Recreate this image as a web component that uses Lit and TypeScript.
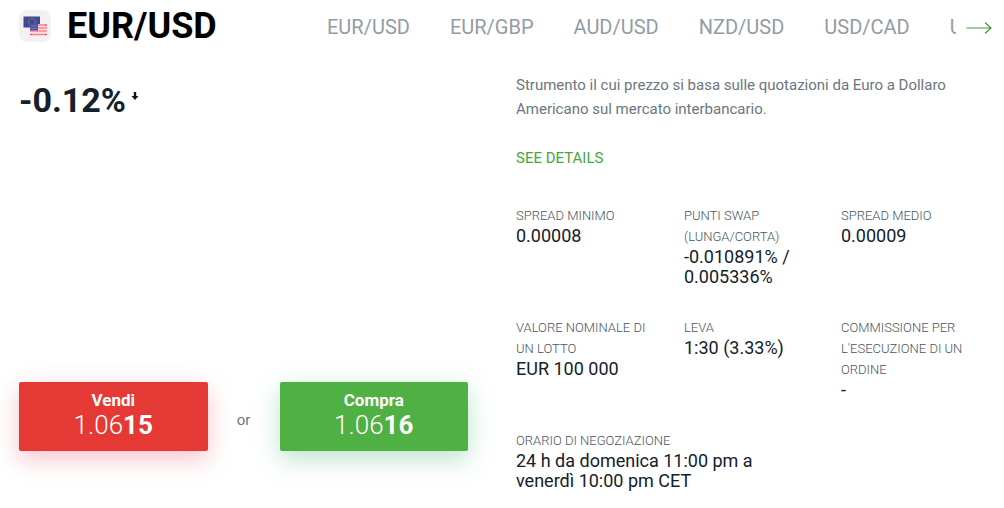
import { LitElement, html, css, nothing } from "lit";
import { customElement } from "lit/decorators.js";

interface Detail {
  label: string;
  value: string;
  wide?: boolean;
}

const PAIRS = ["EUR/USD", "EUR/GBP", "AUD/USD", "NZD/USD", "USD/CAD", "USD/CHF"];

const DETAILS: Detail[] = [
  { label: "Spread minimo", value: "0.00008" },
  { label: "Punti swap (lunga/corta)", value: "-0.010891% / 0.005336%" },
  { label: "Spread medio", value: "0.00009" },
  { label: "Valore nominale di un lotto", value: "EUR 100 000" },
  { label: "Leva", value: "1:30 (3.33%)" },
  { label: "Commissione per l'esecuzione di un ordine", value: "-" },
  { label: "Orario di negoziazione", value: "24 h da domenica 11:00 pm a venerdì 10:00 pm CET", wide: true },
];

@customElement("app-root")
export class AppRoot extends LitElement {
  static styles = css`
    :host {
      display: block;
      background: #fff;
      color: #14212b;
      font-family: Roboto, "Liberation Sans", sans-serif;
      overflow: hidden;
    }
    .header {
      display: flex;
      align-items: center;
      height: 52px;
      padding: 0 12px 0 19px;
    }
    .flags {
      flex: none;
      width: 32px;
      height: 32px;
    }
    .title {
      flex: none;
      width: 259px;
      margin: 0;
      padding-left: 16px;
      box-sizing: border-box;
      color: #000;
      font-size: 36px;
      line-height: 40px;
      font-weight: 700;
    }
    .pairs {
      flex: 1;
      min-width: 0;
      display: flex;
      gap: 40px;
      padding: 2px 0 0 17px;
      overflow: hidden;
    }
    .pair {
      flex: none;
      color: #939ca6;
      font-size: 20px;
      line-height: 24px;
      text-decoration: none;
    }
    .next {
      flex: none;
      display: flex;
      margin-left: 10px;
      padding: 4px 0 0;
      border: 0;
      background: none;
      cursor: pointer;
    }
    .main {
      display: grid;
      grid-template-columns: 1fr 1fr;
      gap: 48px;
      padding: 21px 39px 16px 19px;
    }
    .quote {
      padding-top: 7px;
    }
    .change {
      display: flex;
      gap: 5px;
      font-size: 34px;
      line-height: 40px;
      font-weight: 700;
    }
    .down {
      margin-top: 12px;
    }
    .chart {
      height: 262px;
    }
    .trade {
      display: flex;
      align-items: center;
    }
    .or {
      width: 72px;
      text-align: center;
      color: #6b7680;
      font-size: 15px;
      line-height: 24px;
      padding-top: 6px;
    }
    .order {
      flex: 1;
      padding: 8px 0 11px;
      border: 0;
      border-radius: 2px;
      color: #fff;
      font-family: inherit;
      cursor: pointer;
    }
    .sell {
      background: #e53935;
      box-shadow: 0 8px 24px rgba(229, 57, 80, 0.3);
    }
    .buy {
      background: #4fb043;
      box-shadow: 0 8px 24px rgba(60, 175, 110, 0.35);
    }
    .side {
      display: block;
      font-size: 17px;
      line-height: 20px;
      font-weight: 700;
    }
    .price {
      display: block;
      font-size: 26px;
      line-height: 30px;
      font-weight: 300;
    }
    .pips {
      font-weight: 700;
    }
    .text {
      margin: 0 0 25px;
      color: #6b7680;
      font-size: 15px;
      line-height: 24px;
    }
    .more {
      display: block;
      width: max-content;
      color: #45a83a;
      font-size: 15px;
      line-height: 24px;
      text-decoration: none;
    }
    .details {
      display: grid;
      grid-template-columns: 144fr 133fr 124fr;
      gap: 30px 24px;
      margin: 35px 0 0;
    }
    .wide {
      grid-column: span 2;
      padding-right: 24px;
    }
    .label {
      color: #4a555e;
      font-size: 13px;
      line-height: 21px;
      font-weight: 300;
      text-transform: uppercase;
    }
    .value {
      margin: 0;
      font-size: 18px;
      line-height: 20px;
    }
  `;

  private flags() {
    return html`<svg class="flags" viewBox="0 0 32 32" aria-hidden="true">
      <rect width="32" height="32" rx="8" fill="#f2f2f2" />
      <rect x="4.500" y="6.500" width="16.500" height="11" fill="#3f479b" />
      <circle cx="13" cy="12" r="3.600" fill="none" stroke="#77745f" stroke-width="1" />
      <rect x="11" y="14" width="17" height="11.500" fill="#ffdfe2" />
      <path d="M11 15h17M11 18h17M11 21h17M11 24.500h17" stroke="#fb8492" stroke-width="1.600" />
      <rect x="11" y="14" width="8" height="6.500" fill="#4c529f" />
      <path d="M12.500 16h5M12.500 18.500h5" stroke="#9a9fd0" stroke-width="1" stroke-dasharray="1 1" />
      <path d="M11 24.500h1.500M26 24.500h1.500M26 15h1.500" stroke="#ee3c50" stroke-width="1.200" />
    </svg>`;
  }

  private order(kind: string, side: string, price: string, pips: string) {
    return html`<button class="order ${kind}" type="button">
      <span class="side">${side}</span>
      <span class="price">${price}<span class="pips">${pips}</span></span>
    </button>`;
  }

  render() {
    return html`
      <header class="header">
        ${this.flags()}
        <h1 class="title">EUR/USD</h1>
        <nav class="pairs">${PAIRS.map((p) => html`<a class="pair" href="#">${p}</a>`)}</nav>
        <button class="next" type="button" aria-label="Next">
          <svg width="26" height="14" viewBox="0 0 26 14" fill="none" stroke="#3f9c35" stroke-width="1.200">
            <path d="M.5 7H25M19 1.500L25 7l-6 5.500" />
          </svg>
        </button>
      </header>
      <main class="main">
        <section class="quote">
          <div class="change">
            <span>-0.12%</span>
            <svg class="down" width="8" height="8" viewBox="0 0 8 8" aria-hidden="true">
              <path d="M2.800 0h2.400v4H7.500L4 8 .5 4h2.300z" fill="#111" />
            </svg>
          </div>
          <div class="chart"></div>
          <div class="trade">
            ${this.order("sell", "Vendi", "1.06", "15")}
            <span class="or">or</span>
            ${this.order("buy", "Compra", "1.06", "16")}
          </div>
        </section>
        <section>
          <p class="text">
            Strumento il cui prezzo si basa sulle quotazioni da Euro a Dollaro Americano sul mercato interbancario.
          </p>
          <a class="more" href="#">SEE DETAILS</a>
          <dl class="details">
            ${DETAILS.map(
              (d) => html`<div class=${d.wide ? "wide" : nothing}>
                <dt class="label">${d.label}</dt>
                <dd class="value">${d.value}</dd>
              </div>`
            )}
          </dl>
        </section>
      </main>
    `;
  }
}
